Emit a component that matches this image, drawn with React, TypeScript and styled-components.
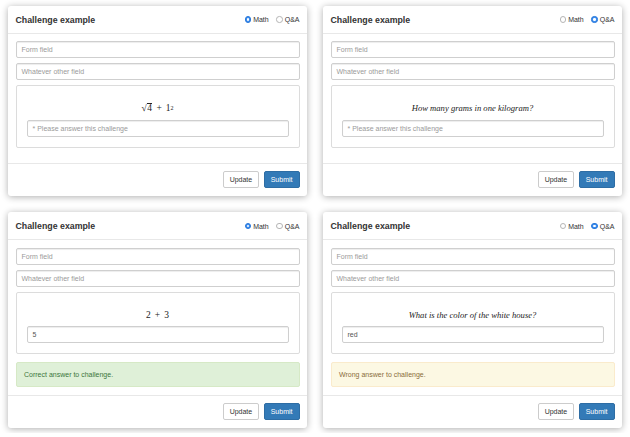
import React from "react";
import styled, { createGlobalStyle } from "styled-components";

const GlobalStyle = createGlobalStyle`
  html, body { margin: 0; padding: 0; background: #ffffff; }
  body { font-family: "Liberation Sans", Arial, sans-serif; color: #333; }
  * { box-sizing: border-box; }
`;

const Page = styled.div`
  display: grid;
  grid-template-columns: 299px 299px;
  column-gap: 16px;
  row-gap: 16.5px;
  padding: 5.5px 8px;
  align-items: start;
`;

const Card = styled.div`
  background: #fff;
  border-radius: 3px;
  box-shadow: 0 1px 7px rgba(0, 0, 0, 0.32);
  display: flex;
  flex-direction: column;
`;

const Header = styled.div`
  height: 28px;
  border-bottom: 1px solid #e8e8e8;
  padding: 1px 7.5px 0 7.5px;
  display: flex;
  align-items: center;
  justify-content: space-between;
`;

const Title = styled.div`
  font-size: 8.8px;
  font-weight: 700;
  color: #333;
`;

const Radios = styled.div`
  display: flex;
  align-items: center;
  gap: 7.5px;
  font-size: 7px;
  color: #333;
`;

const RadioLabel = styled.label`
  display: flex;
  align-items: center;
  gap: 2px;
`;

const RadioDot = styled.span<{ $on: boolean }>`
  width: 6.5px;
  height: 6.5px;
  border-radius: 50%;
  display: inline-flex;
  align-items: center;
  justify-content: center;
  background: ${(p) => (p.$on ? "#3b8df0" : "#fff")};
  border: 0.6px solid ${(p) => (p.$on ? "#2a78d8" : "#b5b5b5")};
  &::after {
    content: "";
    width: 2.4px;
    height: 2.4px;
    border-radius: 50%;
    background: ${(p) => (p.$on ? "#fff" : "transparent")};
  }
`;

const Body = styled.div`
  padding: 7.5px;
  display: flex;
  flex-direction: column;
`;

const Input = styled.div<{ $filled?: boolean }>`
  height: 17px;
  border: 1px solid #cfcfcf;
  border-radius: 2px;
  box-shadow: inset 0 1px 1px rgba(0, 0, 0, 0.075);
  padding: 0 5px;
  display: flex;
  align-items: center;
  font-size: 7px;
  color: ${(p) => (p.$filled ? "#555" : "#9a9a9a")};
  background: #fff;
`;

const Field = styled(Input)`
  margin-bottom: 5px;
`;

const ChallengeBox = styled.div`
  border: 1px solid #dcdcdc;
  border-radius: 2px;
  padding: 10.5px 10px 10px;
  display: flex;
  flex-direction: column;
`;

const Question = styled.div<{ $italic?: boolean }>`
  height: 23px;
  display: flex;
  align-items: center;
  justify-content: center;
  font-family: "Liberation Serif", "Times New Roman", serif;
  font-size: ${(p) => (p.$italic ? "8.6px" : "9.5px")};
  font-style: ${(p) => (p.$italic ? "italic" : "normal")};
  color: #222;
  white-space: pre;
`;

const Op = styled.span`
  margin: 0 4px;
`;

const Sqrt = styled.span`
  display: inline-flex;
  align-items: flex-end;
`;

const Radicand = styled.span`
  border-top: 0.7px solid #222;
  padding: 0 0.5px;
  line-height: 1.05;
`;

const Sup = styled.sup`
  font-size: 6px;
  vertical-align: 4px;
  line-height: 0;
`;

const Alert = styled.div<{ $kind: "success" | "warning" }>`
  margin-top: 7.5px;
  height: 25.5px;
  border-radius: 2px;
  padding: 0 7.5px;
  display: flex;
  align-items: center;
  font-size: 7px;
  background: ${(p) => (p.$kind === "success" ? "#dff0d8" : "#fcf8e3")};
  border: 1px solid ${(p) => (p.$kind === "success" ? "#d6e9c6" : "#faebcc")};
  color: ${(p) => (p.$kind === "success" ? "#3c763d" : "#8a6d3b")};
`;

const Spacer = styled.div`
  height: 7.5px;
`;

const Footer = styled.div`
  border-top: 1px solid #e8e8e8;
  padding: 7.5px;
  display: flex;
  justify-content: flex-end;
  gap: 4.5px;
`;

const Button = styled.button<{ $primary?: boolean }>`
  height: 17px;
  padding: 0 6px;
  font-family: "Liberation Sans", Arial, sans-serif;
  font-size: 7px;
  border-radius: 2px;
  border: 1px solid ${(p) => (p.$primary ? "#2e6da4" : "#cccccc")};
  background: ${(p) => (p.$primary ? "#337ab7" : "#ffffff")};
  color: ${(p) => (p.$primary ? "#ffffff" : "#333333")};
  display: flex;
  align-items: center;
`;

type CardData = {
  mode: "math" | "qa";
  question: React.ReactNode;
  answer?: string;
  alert?: { kind: "success" | "warning"; text: string };
};

const cards: CardData[] = [
  {
    mode: "math",
    question: (
      <>
        <Sqrt>
          √<Radicand>4</Radicand>
        </Sqrt>
        <Op>+</Op>1<Sup>2</Sup>
      </>
    ),
  },
  { mode: "qa", question: "How many grams in one kilogram?" },
  {
    mode: "math",
    question: (
      <>
        2<Op>+</Op>3
      </>
    ),
    answer: "5",
    alert: { kind: "success", text: "Correct answer to challenge." },
  },
  {
    mode: "qa",
    question: "What is the color of the white house?",
    answer: "red",
    alert: { kind: "warning", text: "Wrong answer to challenge." },
  },
];

function ChallengeCard({ data }: { data: CardData }) {
  return (
    <Card>
      <Header>
        <Title>Challenge example</Title>
        <Radios>
          <RadioLabel>
            <RadioDot $on={data.mode === "math"} />
            Math
          </RadioLabel>
          <RadioLabel>
            <RadioDot $on={data.mode === "qa"} />
            Q&amp;A
          </RadioLabel>
        </Radios>
      </Header>
      <Body>
        <Field>Form field</Field>
        <Field>Whatever other field</Field>
        <ChallengeBox>
          <Question $italic={data.mode === "qa"}>{data.question}</Question>
          <Input $filled={!!data.answer}>
            {data.answer ?? "* Please answer this challenge"}
          </Input>
        </ChallengeBox>
        {data.alert ? (
          <Alert $kind={data.alert.kind}>{data.alert.text}</Alert>
        ) : (
          <Spacer />
        )}
      </Body>
      <Footer>
        <Button>Update</Button>
        <Button $primary>Submit</Button>
      </Footer>
    </Card>
  );
}

export default function App() {
  return (
    <>
      <GlobalStyle />
      <Page>
        {cards.map((c, i) => (
          <ChallengeCard key={i} data={c} />
        ))}
      </Page>
    </>
  );
}
